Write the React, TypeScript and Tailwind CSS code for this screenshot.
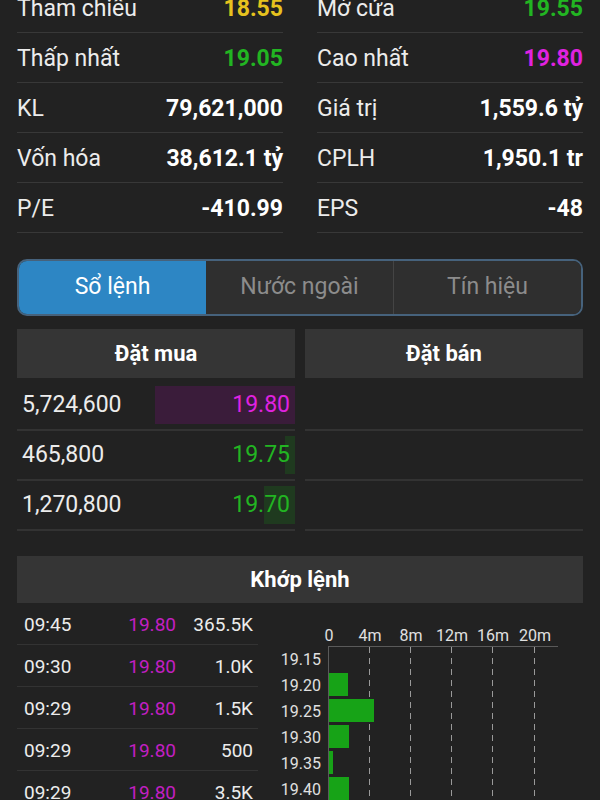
import React from "react";

const stats: [string, string, string, string, string, string][] = [
  ["Tham chiếu", "18.55", "text-[#e6c21e]", "Mở cửa", "19.55", "text-[#22b522]"],
  ["Thấp nhất", "19.05", "text-[#22b522]", "Cao nhất", "19.80", "text-[#e022e0]"],
  ["KL", "79,621,000", "text-white", "Giá trị", "1,559.6 tỷ", "text-white"],
  ["Vốn hóa", "38,612.1 tỷ", "text-white", "CPLH", "1,950.1 tr", "text-white"],
  ["P/E", "-410.99", "text-white", "EPS", "-48", "text-white"],
];

const orders = [
  { vol: "5,724,600", price: "19.80", color: "text-[#e022e0]", bar: 140, barColor: "#3a1c3a" },
  { vol: "465,800", price: "19.75", color: "text-[#22b522]", bar: 10, barColor: "#1f3a1f" },
  { vol: "1,270,800", price: "19.70", color: "text-[#22b522]", bar: 31, barColor: "#1f3a1f" },
];

const trades = [
  ["09:45", "19.80", "365.5K"],
  ["09:30", "19.80", "1.0K"],
  ["09:29", "19.80", "1.5K"],
  ["09:29", "19.80", "500"],
  ["09:29", "19.80", "3.5K"],
];

function Chart() {
  const xs = [
    ["0", 329],
    ["4m", 370],
    ["8m", 411],
    ["12m", 452],
    ["16m", 493],
    ["20m", 535],
  ] as const;
  const ys = ["19.15", "19.20", "19.25", "19.30", "19.35", "19.40"];
  const bars = [0, 19, 45, 20, 4, 20];
  return (
    <svg width={325} height={198} className="block shrink-0">
      <g transform="translate(-258,-602)" fontFamily="Roboto, sans-serif" fontSize="16" fill="#e0e0e0">
        {xs.map(([l, x]) => (
          <text key={l} x={x} y={640} textAnchor="middle">
            {l}
          </text>
        ))}
        <line x1={328} y1={645.5} x2={558} y2={645.5} stroke="#5a5a5a" strokeWidth={1} />
        <line x1={328.5} y1={645} x2={328.5} y2={800} stroke="#5a5a5a" strokeWidth={1} />
        {xs.slice(1).map(([l, x]) => (
          <line key={l} x1={x - 0.5} y1={646} x2={x - 0.5} y2={800} stroke="#9a9a9a" strokeWidth={1} strokeDasharray="6 5" />
        ))}
        {ys.map((l, i) => (
          <g key={l}>
            <text x={321} y={664 + i * 26} textAnchor="end">
              {l}
            </text>
            {bars[i] > 0 && <rect x={329} y={672 + (i - 1) * 26} width={bars[i]} height={23} fill="#17a317" />}
          </g>
        ))}
      </g>
    </svg>
  );
}

export default function App() {
  return (
    <div
      className="w-[600px] h-[800px] overflow-hidden bg-[#222222] px-[17px]"
      style={{ fontFamily: "Roboto, 'Noto Sans', sans-serif" }}
    >
      <div className="mt-[-17px] grid grid-cols-2 gap-x-[34px]">
        {stats.map((r) => (
          <React.Fragment key={r[0]}>
            <div className="h-[50px] pt-[4px] flex items-center justify-between border-b border-[#383838] text-[23px]">
              <span className="text-[#ececec]">{r[0]}</span>
              <span className={`font-bold ${r[2]}`}>{r[1]}</span>
            </div>
            <div className="h-[50px] pt-[4px] flex items-center justify-between border-b border-[#383838] text-[23px]">
              <span className="text-[#ececec]">{r[3]}</span>
              <span className={`font-bold ${r[5]}`}>{r[4]}</span>
            </div>
          </React.Fragment>
        ))}
      </div>

      <div className="mt-[26px] h-[57px] flex rounded-[10px] border-2 border-[#46627c] overflow-hidden text-[23px]">
        <div className="flex-1 flex items-center justify-center bg-[#2d86c4] text-white">Sổ lệnh</div>
        <div className="flex-1 flex items-center justify-center bg-[#2f2f2f] text-[#8c8c8c] border-r border-[#444]">
          Nước ngoài
        </div>
        <div className="flex-1 flex items-center justify-center bg-[#2f2f2f] text-[#8c8c8c]">Tín hiệu</div>
      </div>

      <div className="mt-[13px] grid grid-cols-2 gap-x-[10px]">
        <div className="h-[49px] bg-[#353535] flex items-center justify-center text-white font-bold text-[22px]">
          Đặt mua
        </div>
        <div className="h-[49px] bg-[#353535] flex items-center justify-center text-white font-bold text-[22px]">
          Đặt bán
        </div>
        <div className="mt-[3px] flex flex-col">
          {orders.map((o) => (
            <div key={o.vol} className="h-[50px] border-b-2 border-[#333] flex items-center">
              <div className="relative flex-1 h-[38px] flex items-center justify-between pl-[5px] pr-[5px] text-[23px]">
                <div
                  className="absolute right-0 top-0 bottom-0"
                  style={{ width: o.bar, background: o.barColor }}
                />
                <span className="relative text-[#ececec]">{o.vol}</span>
                <span className={`relative ${o.color}`}>{o.price}</span>
              </div>
            </div>
          ))}
        </div>
        <div className="mt-[3px] flex flex-col">
          {orders.map((o) => (
            <div key={o.vol} className="h-[50px] border-b-2 border-[#333]" />
          ))}
        </div>
      </div>

      <div className="mt-[25px] h-[47px] bg-[#353535] flex items-center justify-center text-white font-bold text-[22px]">
        Khớp lệnh
      </div>

      <div className="flex">
        <div className="w-[241px] shrink-0 flex flex-col">
          {trades.map((t, i) => (
            <div key={i} className="h-[42px] pt-[3px] border-b border-[#333] flex items-center text-[19px] pl-[7px] pr-[5px]">
              <span className="text-[#ececec] w-[70px]">{t[0]}</span>
              <span className="text-[#c21fc2] w-[82px] text-right">{t[1]}</span>
              <span className="text-[#ececec] flex-1 text-right">{t[2]}</span>
            </div>
          ))}
        </div>
        <Chart />
      </div>
    </div>
  );
}
